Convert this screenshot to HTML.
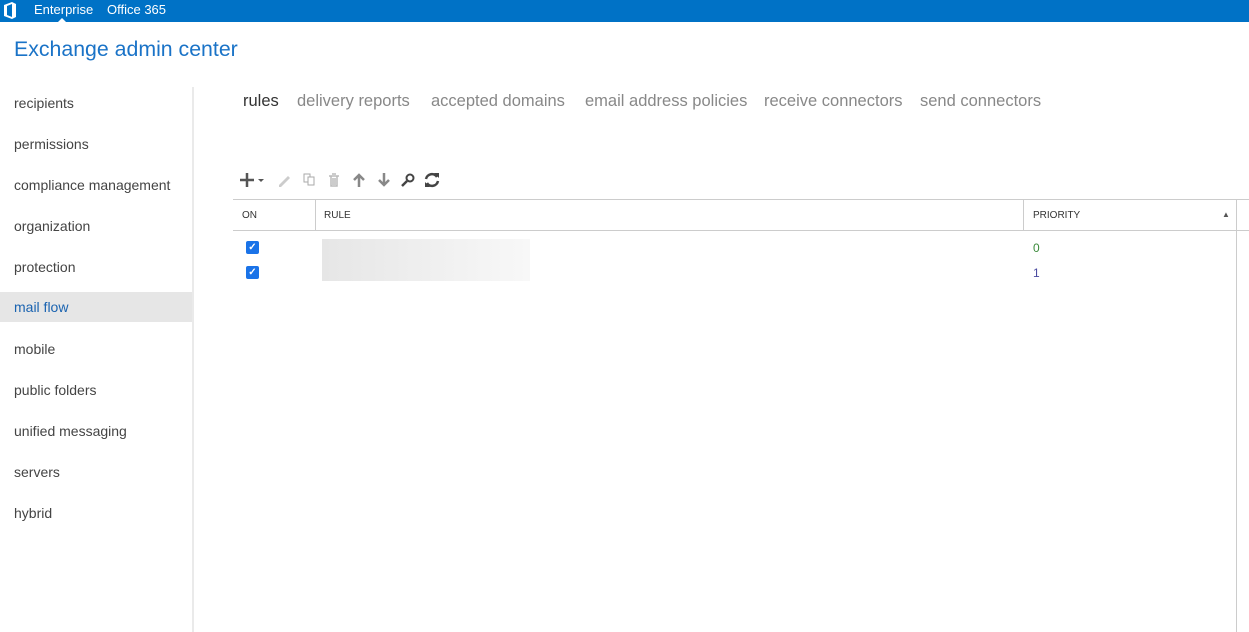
<!DOCTYPE html>
<html><head><style>
body{margin:0;width:1249px;height:632px;background:#fff;font-family:"Segoe UI","Liberation Sans",sans-serif;position:relative;overflow:hidden}
.top{position:absolute;left:0;top:0;width:1249px;height:22px;background:#0072c6;color:#fff;font-size:13px}
.top span{position:absolute;top:2px}
h1{position:absolute;left:14px;top:37px;margin:0;font-weight:normal;font-size:21.3px;color:#1a73c7}
.nav div{position:absolute;left:0;width:193px;height:30px;line-height:30px;padding-left:14px;box-sizing:border-box;font-size:14px;color:#444}
.sep{position:absolute;left:192px;top:87px;width:2px;height:545px;background:#eaeaea}
.tabs span{position:absolute;top:92px;font-size:16.5px;color:#888}
.hd{position:absolute;top:199px;left:233px;width:1016px;height:30px;border-top:1px solid #ccc;border-bottom:1px solid #ccc;font-size:10px;color:#333}
.hd span{position:absolute;top:10px}
.vl{position:absolute;width:1px;background:#ccc}
.cb{position:absolute;left:246px;width:13px;height:13px;background:#1a73e8;border-radius:2px;color:#fff;font-size:10px;line-height:13px;text-align:center;font-weight:bold}
.ic{position:absolute;top:170px}
</style></head><body>
<div class="top">
<svg style="position:absolute;left:3px;top:2px" width="14" height="17" viewBox="0 0 14 17"><path d="M1 3 L9 0 L13 2 L13 15 L9 17 L1 14 Z M4 4 L4 13 L9 15 L9 2 Z" fill="#fff"/></svg>
<span style="left:34px">Enterprise</span><span style="left:107px">Office 365</span>
<div style="position:absolute;left:58px;top:18px;width:0;height:0;border:4px solid transparent;border-bottom-color:#fff;border-top:0"></div>
</div>
<h1>Exchange admin center</h1>
<div class="nav">
<div style="top:88px">recipients</div>
<div style="top:129px">permissions</div>
<div style="top:170px">compliance management</div>
<div style="top:211px">organization</div>
<div style="top:252px">protection</div>
<div style="top:292px;background:#e6e6e6;color:#1a63b0">mail flow</div>
<div style="top:334px">mobile</div>
<div style="top:375px">public folders</div>
<div style="top:416px">unified messaging</div>
<div style="top:457px">servers</div>
<div style="top:498px">hybrid</div>
</div>
<div class="sep"></div>
<div class="tabs">
<span style="left:243px;color:#333">rules</span>
<span style="left:297px">delivery reports</span>
<span style="left:431px">accepted domains</span>
<span style="left:585px">email address policies</span>
<span style="left:764px">receive connectors</span>
<span style="left:920px">send connectors</span>
</div>
<svg class="ic" style="left:238px" width="210" height="20" viewBox="0 0 210 20">
<path d="M2 10H16M9 3V17" stroke="#555" stroke-width="2.5"/>
<path d="M20 9l3 3 3-3z" fill="#555"/>
<path d="M41 15l9-9 2 2-9 9h-2z" fill="#ccc"/>
<rect x="66" y="4" width="6" height="8" fill="none" stroke="#aaa"/><rect x="70" y="7" width="6" height="8" fill="#fff" stroke="#aaa"/>
<path d="M91 6h10M93 6v10h6V6M95 8v7M97 8v7M94 4h4" stroke="#bbb" fill="none" stroke-width="1.5"/>
<path d="M121 17V5M116 10l5-5 5 5" stroke="#888" stroke-width="2.5" fill="none"/>
<path d="M146 3v12M141 10l5 5 5-5" stroke="#888" stroke-width="2.5" fill="none"/>
<circle cx="172" cy="8" r="3.5" stroke="#444" stroke-width="2" fill="none"/><path d="M169 11l-5 5" stroke="#444" stroke-width="2.5"/>
<path d="M188 9a6 6 0 0 1 11-2M200 11a6 6 0 0 1-11 2" stroke="#444" stroke-width="2.5" fill="none"/><path d="M196 3l5 0 0 5z M192 17l-5 0 0-5z" fill="#444"/>
</svg>
<div class="hd"><span style="left:9px">ON</span><span style="left:91px">RULE</span><span style="left:800px">PRIORITY</span><span style="left:989px;font-size:8px;color:#555;top:10px">▲</span></div>
<div class="vl" style="left:315px;top:200px;height:30px"></div>
<div class="vl" style="left:1023px;top:200px;height:30px"></div>
<div class="vl" style="left:1236px;top:200px;height:432px"></div>
<div class="cb" style="top:241px">✓</div>
<div class="cb" style="top:266px">✓</div>
<div style="position:absolute;left:322px;top:239px;width:208px;height:42px;background:linear-gradient(90deg,#e6e6e6,#efefef 50%,#f8f8f8)"></div>
<div style="position:absolute;left:1033px;top:241px;font-size:12px;color:#3a8a3a">0</div>
<div style="position:absolute;left:1033px;top:266px;font-size:12px;color:#4a4aa0">1</div>
</body></html>
